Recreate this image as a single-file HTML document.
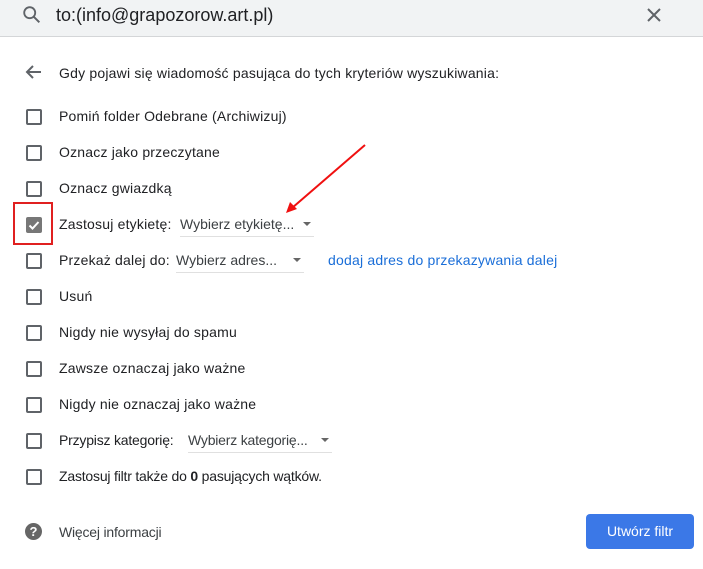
<!DOCTYPE html><html><head><meta charset="utf-8"><style>
body{margin:0;width:703px;height:569px;background:#fff;font-family:"Liberation Sans",sans-serif;color:#202124;position:relative;overflow:hidden}
.hdr{position:absolute;left:0;top:0;width:703px;height:36px;background:#f1f3f4;border-bottom:1px solid #d4d6d8}
.t{position:absolute;font-size:14px;letter-spacing:0.2px;white-space:nowrap;line-height:16px}
.cb{position:absolute;left:26px;width:12px;height:12px;border:2px solid #5f6368;border-radius:2px}
.dd{position:absolute;font-size:14px;color:#3c4043;border-bottom:1px solid #e0e0e0;height:20px;line-height:16px;white-space:nowrap}
.dd:after{content:"";position:absolute;right:3px;top:6px;border:4px solid transparent;border-top:4px solid #666}
</style></head><body>
<div class="hdr"></div>
<svg style="position:absolute;left:21px;top:4px" width="22" height="22" viewBox="0 0 24 24"><circle cx="9.5" cy="9.5" r="6" fill="none" stroke="#5f6368" stroke-width="2"/><path d="M14 14l6 6" stroke="#5f6368" stroke-width="2.2"/></svg>
<div class="t" style="left:56px;top:5px;font-size:18px;line-height:20px;letter-spacing:0">to:(info@grapozorow.art.pl)</div>
<svg style="position:absolute;left:645px;top:6px" width="18" height="18" viewBox="0 0 18 18"><path d="M3 3l12 12M15 3L3 15" stroke="#5f6368" stroke-width="2"/></svg>
<svg style="position:absolute;left:24px;top:64px" width="18" height="16" viewBox="0 0 18 16"><path d="M17 8H3M9 2L3 8l6 6" fill="none" stroke="#5f6368" stroke-width="2"/></svg>
<div class="t" style="left:59px;top:65px">Gdy pojawi się wiadomość pasująca do tych kryteriów wyszukiwania:</div>

<div class="cb" style="top:109px"></div><div class="t" style="left:59px;top:108px">Pomiń folder Odebrane (Archiwizuj)</div>
<div class="cb" style="top:145px"></div><div class="t" style="left:59px;top:144px">Oznacz jako przeczytane</div>
<div class="cb" style="top:181px"></div><div class="t" style="left:59px;top:180px">Oznacz gwiazdką</div>
<div style="position:absolute;left:26px;top:217px;width:16px;height:16px;background:#777;border-radius:2px"></div>
<svg style="position:absolute;left:26px;top:217px" width="16" height="16" viewBox="0 0 16 16"><path d="M3.5 8.5l3 3 6-6.5" fill="none" stroke="#fff" stroke-width="2"/></svg>
<div style="position:absolute;left:13px;top:202px;width:36px;height:39px;border:2px solid #e02020"></div>
<div class="t" style="left:59px;top:216px">Zastosuj etykietę:</div>
<div class="dd" style="left:180px;top:216px;width:134px">Wybierz etykietę...</div>
<div class="cb" style="top:253px"></div><div class="t" style="left:59px;top:252px">Przekaż dalej do:</div>
<div class="dd" style="left:176px;top:252px;width:128px">Wybierz adres...</div>
<div class="t" style="left:328px;top:252px;color:#1a6ed8">dodaj adres do przekazywania dalej</div>
<div class="cb" style="top:289px"></div><div class="t" style="left:59px;top:288px">Usuń</div>
<div class="cb" style="top:325px"></div><div class="t" style="left:59px;top:324px">Nigdy nie wysyłaj do spamu</div>
<div class="cb" style="top:361px"></div><div class="t" style="left:59px;top:360px">Zawsze oznaczaj jako ważne</div>
<div class="cb" style="top:397px"></div><div class="t" style="left:59px;top:396px">Nigdy nie oznaczaj jako ważne</div>
<div class="cb" style="top:433px"></div><div class="t" style="left:59px;top:432px;letter-spacing:-0.2px">Przypisz kategorię:</div>
<div class="dd" style="left:188px;top:432px;width:144px;letter-spacing:-0.2px">Wybierz kategorię...</div>
<div class="cb" style="top:469px"></div><div class="t" style="left:59px;top:468px;letter-spacing:-0.2px">Zastosuj filtr także do <b>0</b> pasujących wątków.</div>
<div style="position:absolute;left:25px;top:523px;width:17px;height:17px;border-radius:50%;background:#666;color:#fff;font-size:13px;font-weight:bold;text-align:center;line-height:17px">?</div>
<div class="t" style="left:59px;top:524px;color:#3c4043;letter-spacing:-0.2px">Więcej informacji</div>
<div style="position:absolute;left:586px;top:514px;width:108px;height:35px;background:#3b78e7;border-radius:4px;color:#fff;font-size:14px;line-height:35px;text-align:center">Utwórz filtr</div>
<svg style="position:absolute;left:0;top:0" width="703" height="569"><path d="M365 145L292 208" stroke="#f01010" stroke-width="2"/><path d="M286 213l4-11 7 7z" fill="#f01010"/></svg>
</body></html>
